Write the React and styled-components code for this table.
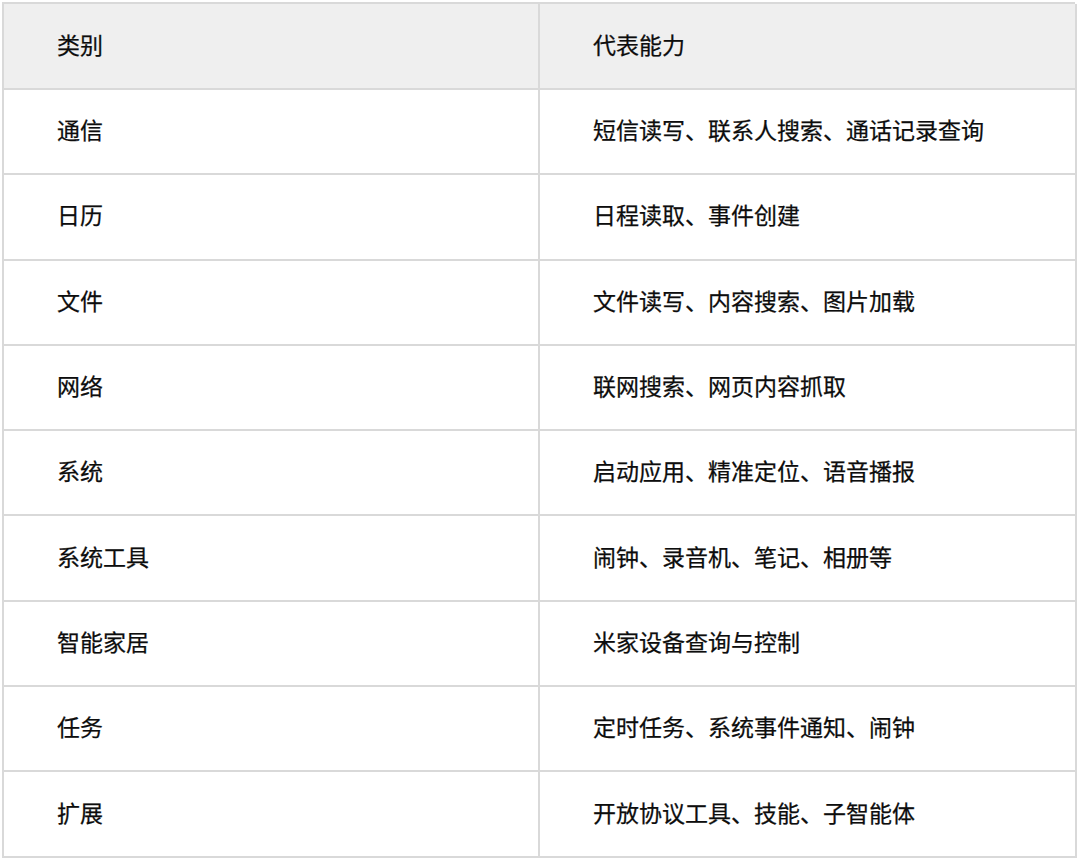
import React from "react";
import styled, { createGlobalStyle } from "styled-components";

const rows = [
  ["通信", "短信读写、联系人搜索、通话记录查询"],
  ["日历", "日程读取、事件创建"],
  ["文件", "文件读写、内容搜索、图片加载"],
  ["网络", "联网搜索、网页内容抓取"],
  ["系统", "启动应用、精准定位、语音播报"],
  ["系统工具", "闹钟、录音机、笔记、相册等"],
  ["智能家居", "米家设备查询与控制"],
  ["任务", "定时任务、系统事件通知、闹钟"],
  ["扩展", "开放协议工具、技能、子智能体"],
];

const GlobalStyle = createGlobalStyle`
  html, body {
    margin: 0;
    background: #ffffff;
  }
  body {
    font-family: "Noto Sans CJK SC", "Noto Sans", sans-serif;
    color: #000000;
  }
`;

const Page = styled.div`
  padding: 2px 0 0 2px;
`;

const Table = styled.div`
  display: grid;
  grid-template-columns: 536px 537px;
  grid-template-rows: 86px repeat(9, 85.3px);
  width: 1073px;
  border-top: 2px solid #d9d9d9;
  border-left: 2px solid #d9d9d9;
  box-sizing: border-box;
`;

const Cell = styled.div`
  display: flex;
  align-items: center;
  box-sizing: border-box;
  padding-left: ${(p) => (p.$first ? "53px" : "53px")};
  padding-bottom: 4px;
  border-right: 2px solid #d9d9d9;
  border-bottom: 2px solid #d9d9d9;
  background: ${(p) => (p.$head ? "#efefef" : "#ffffff")};
  font-size: 23px;
  line-height: 1;
  color: #0d0d0d;
  -webkit-text-stroke: 0.25px #0d0d0d;
  white-space: nowrap;
`;

export default function App() {
  return (
    <>
      <GlobalStyle />
      <Page>
        <Table>
          <Cell $head $first>类别</Cell>
          <Cell $head>代表能力</Cell>
          {rows.map(([kind, ability]) => (
            <React.Fragment key={kind}>
              <Cell $first>{kind}</Cell>
              <Cell>{ability}</Cell>
            </React.Fragment>
          ))}
        </Table>
      </Page>
    </>
  );
}
